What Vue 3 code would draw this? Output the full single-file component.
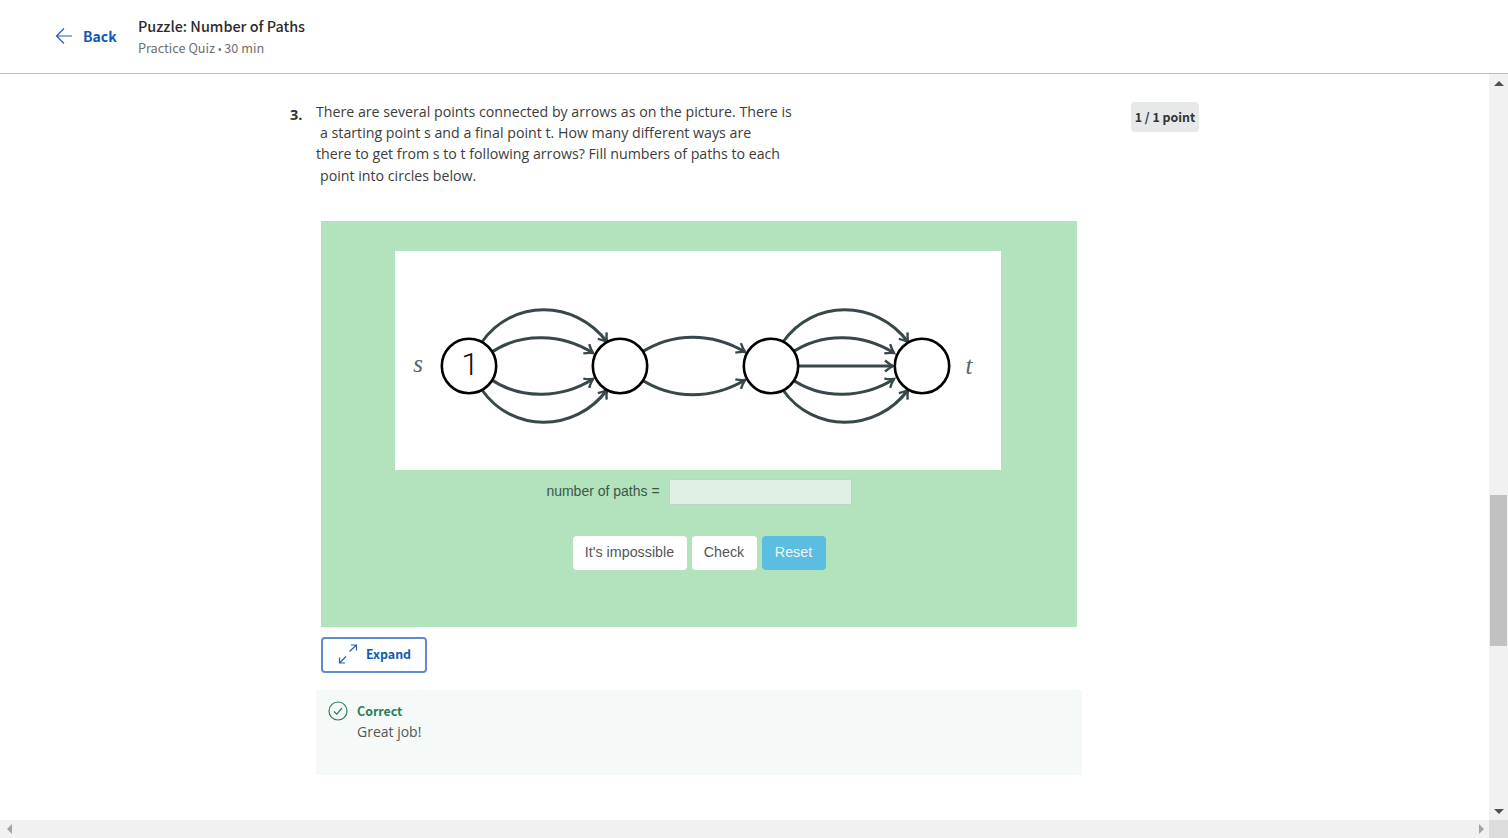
<template>
  <div class="page">
    <header class="top-bar">
      <a class="back-link">
        <svg class="back-icon" width="18" height="18" viewBox="0 0 18 18">
          <path d="M17 9H1.5M9 1.5L1.5 9L9 16.5" fill="none" stroke="#1f5fb8" stroke-width="1.2" />
        </svg>
        <span class="back-label">Back</span>
      </a>
      <div class="quiz-info">
        <div class="quiz-title">Puzzle: Number of Paths</div>
        <div class="quiz-meta">Practice Quiz <span class="dot">•</span> 30 min</div>
      </div>
    </header>

    <div class="middle">
      <main class="content">
        <div class="question-head">
          <div class="question-no">3.</div>
          <div class="question-text">
            <div>There are several points connected by arrows as on the picture. There is</div>
            <div class="indent">a starting point s and a final point t. How many different ways are</div>
            <div>there to get from s to t following arrows? Fill numbers of paths to each</div>
            <div class="indent">point into circles below.</div>
          </div>
          <div class="score">1 / 1 point</div>
        </div>

        <section class="puzzle">
          <div class="graph-box">
            <svg width="606" height="219" viewBox="0 0 606 219">
              <defs>
                <marker id="head" markerUnits="userSpaceOnUse" markerWidth="16" markerHeight="16" refX="11" refY="8" orient="auto" overflow="visible">
                  <path d="M3 2.5Q7 6 11 8Q7 10 3 13.5" fill="none" stroke="#37474a" stroke-width="2.4" />
                </marker>
              </defs>
              <path
                v-for="(d, i) in edges"
                :key="i"
                :d="d"
                fill="none"
                stroke="#37474a"
                stroke-width="3"
                marker-end="url(#head)"
              />
              <circle v-for="x in nodes" :key="x" :cx="x" cy="115" r="27.2" fill="#fff" stroke="#000" stroke-width="2.6" />
              <text class="node-num" x="75" y="124" text-anchor="middle">1</text>
              <text class="graph-label" x="23" y="121" text-anchor="middle">s</text>
              <text class="graph-label" x="574" y="123" text-anchor="middle">t</text>
            </svg>
          </div>
          <div class="answer-row">
            <label>number of paths =</label>
            <div class="answer-input"></div>
          </div>
          <div class="button-row">
            <button class="btn btn-wide">It's impossible</button>
            <button class="btn btn-check">Check</button>
            <button class="btn btn-reset">Reset</button>
          </div>
        </section>

        <button class="expand-btn">
          <svg width="20" height="20" viewBox="0 0 20 20">
            <path d="M11.5 7.5L18.5 1M13 1H18.5V6.5M8 12.5L1.5 19M1.5 13.5V19H7" fill="none" stroke="#1f5fb8" stroke-width="1.2" />
          </svg>
          <span>Expand</span>
        </button>

        <div class="feedback">
          <svg class="check-icon" width="20" height="20" viewBox="0 0 20 20">
            <circle cx="10" cy="10" r="9" fill="none" stroke="#2a7f54" stroke-width="1.2" />
            <path d="M6 10.5L8.8 13.2L14 7" fill="none" stroke="#2a7f54" stroke-width="1.2" />
          </svg>
          <div>
            <div class="feedback-title">Correct</div>
            <div class="feedback-text">Great job!</div>
          </div>
        </div>
      </main>

      <aside class="v-scroll">
        <div class="arrow arrow-up"></div>
        <div class="v-thumb"></div>
        <div class="arrow arrow-down"></div>
      </aside>
    </div>

    <div class="h-scroll">
      <div class="arrow arrow-left"></div>
      <div class="arrow arrow-right"></div>
      <div class="corner"></div>
    </div>
  </div>
</template>

<script setup>
const nodes = [74, 225, 376, 527];

// 节点之间的弧线，局部坐标
const arcs = [
  'M87 91C117 48 180 48 212 91',
  'M94 103C126 80 168 83 198 102',
  'M94 127C126 150 168 147 198 128',
  'M87 139C117 182 180 182 212 139',
];

const edges = [
  ...arcs,
  'M244 103C278 80 318 82 350 101',
  'M244 127C278 150 318 148 350 129',
  ...arcs.map((d) => shift(d, 301)),
  'M403 115H498',
];

function shift(d, dx) {
  let isX = true;
  return d.replace(/\d+/g, (n) => {
    const v = isX ? Number(n) + dx : n;
    isX = !isX;
    return v;
  });
}
</script>

<style>
html,
body {
  margin: 0;
  overflow: hidden;
  background: #fff;
}
</style>

<style scoped>
.page {
  height: 838px;
  display: flex;
  flex-direction: column;
  font-family: "Open Sans", sans-serif;
  color: #3c3c3c;
}

.top-bar {
  height: 74px;
  flex-shrink: 0;
  box-sizing: border-box;
  border-bottom: 1px solid #bdbdbd;
  display: flex;
  align-items: center;
  padding-left: 55px;
  font-family: "Noto Sans CJK SC", "Noto Sans", sans-serif;
}

.back-link {
  display: flex;
  align-items: center;
  gap: 10px;
  width: 83px;
  color: #1259b4;
  font-size: 14px;
  font-weight: 700;
}

.back-label {
  padding-bottom: 2px;
}

.back-icon {
  margin-top: -1px;
}

.quiz-info {
  padding-top: 2px;
}

.quiz-title {
  font-size: 14.4px;
  font-weight: 500;
  line-height: 21px;
  color: #2b2b2b;
}

.quiz-meta {
  font-size: 12.7px;
  line-height: 21px;
  margin-top: 1px;
  color: #6f6f6f;
}

.dot {
  font-family: "Liberation Sans", sans-serif;
  font-size: 10px;
}

.middle {
  flex: 1;
  display: flex;
  min-height: 0;
}

.content {
  flex: 1;
  padding: 27px 0 0 290px;
  box-sizing: border-box;
}

.question-head {
  display: flex;
  width: 909px;
  height: 120px;
}

.question-no {
  width: 26px;
  font-size: 14.5px;
  font-weight: 700;
  line-height: 28px;
  color: #333;
}

.question-text {
  flex: 1;
  font-size: 14.2px;
  line-height: 21.2px;
}

.indent {
  padding-left: 4px;
}

.score {
  width: 68px;
  height: 30px;
  margin-top: 1px;
  border-radius: 4px;
  background: #e6e8e9;
  font-family: "Noto Sans CJK SC", "Noto Sans", sans-serif;
  font-size: 12.4px;
  font-weight: 700;
  line-height: 30px;
  text-align: center;
  white-space: nowrap;
  color: #333;
}

.puzzle {
  width: 756px;
  height: 406px;
  margin-left: 31px;
  padding-top: 30px;
  box-sizing: border-box;
  background: #b2e3bc;
  font-family: "Liberation Sans", sans-serif;
  font-size: 14px;
}

.graph-box {
  width: 606px;
  height: 219px;
  margin-left: 74px;
  background: #fff;
}

.graph-box svg {
  display: block;
}

.node-num {
  font-family: Roboto, sans-serif;
  font-size: 32px;
  font-weight: 300;
  fill: #111;
}

.graph-label {
  font-family: "Liberation Serif", serif;
  font-style: italic;
  font-size: 25px;
  fill: #56666a;
}

.answer-row {
  display: flex;
  justify-content: center;
  align-items: center;
  gap: 8px;
  margin-top: 9px;
  color: #3f5546;
}

.answer-row label {
  margin-top: -2px;
}

.answer-input {
  width: 183px;
  height: 26px;
  margin-left: 1px;
  box-sizing: border-box;
  background: #e0f0e5;
  border: 1px solid #bfd2c4;
}

.button-row {
  display: flex;
  justify-content: center;
  gap: 5px;
  margin-top: 31px;
}

.btn {
  height: 34px;
  padding: 0 0 2px;
  border: none;
  border-radius: 4px;
  background: #fff;
  color: #555;
  font-family: inherit;
  font-size: 14.3px;
}

.btn-wide {
  width: 114px;
}

.btn-check {
  width: 65px;
}

.btn-reset {
  width: 64px;
  background: #5bbde0;
  color: #eef8fc;
}

.expand-btn {
  display: flex;
  align-items: center;
  gap: 8px;
  width: 106px;
  height: 36px;
  margin: 10px 0 0 31px;
  padding: 0 0 2px 15px;
  box-sizing: border-box;
  border: 2px solid #5f8bd2;
  border-radius: 4px;
  background: #fff;
  color: #1259b4;
  font-family: "Noto Sans CJK SC", "Noto Sans", sans-serif;
  font-size: 12.4px;
  font-weight: 700;
}

.feedback {
  display: flex;
  gap: 9px;
  width: 766px;
  height: 85px;
  margin: 17px 0 0 26px;
  padding: 11px 12px 0;
  box-sizing: border-box;
  background: #f5faf8;
}

.feedback-title {
  font-family: "Noto Sans CJK SC", "Noto Sans", sans-serif;
  font-size: 12.4px;
  font-weight: 700;
  line-height: 20px;
  color: #2a7f54;
}

.feedback-text {
  font-size: 14px;
  line-height: 21px;
  color: #555;
}

.v-scroll {
  width: 19px;
  flex-shrink: 0;
  background: #f1f1f1;
  display: flex;
  flex-direction: column;
  align-items: center;
}

.v-thumb {
  width: 17px;
  height: 151px;
  margin-top: 409px;
  background: #c1c1c1;
}

.arrow {
  width: 0;
  height: 0;
  border-style: solid;
  border-color: transparent;
}

.arrow-up {
  margin-top: 7px;
  border-width: 0 5px 5px;
  border-bottom-color: #505050;
}

.arrow-down {
  margin-top: auto;
  margin-bottom: 6px;
  border-width: 5px 5px 0;
  border-top-color: #505050;
}

.h-scroll {
  height: 18px;
  flex-shrink: 0;
  display: flex;
  align-items: center;
  padding-left: 7px;
  background: #f1f1f1;
}

.arrow-left {
  border-width: 5px 5px 5px 0;
  border-right-color: #a3a3a3;
}

.arrow-right {
  margin-left: auto;
  margin-right: 5px;
  border-width: 5px 0 5px 5px;
  border-left-color: #a3a3a3;
}

.corner {
  width: 19px;
  height: 18px;
  background: #dcdcdc;
}
</style>
